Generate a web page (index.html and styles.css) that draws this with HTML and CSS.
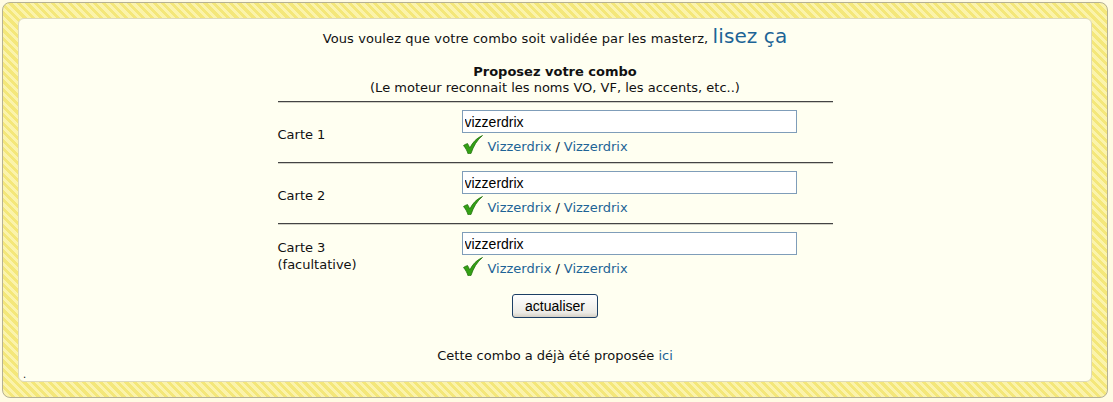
FILE: index.html
```html
<!DOCTYPE html>
<html lang="fr">
<head>
    <meta charset="UTF-8">
    <title>Proposez votre combo</title>
    <link rel="stylesheet" href="styles.css">
</head>
<body>

<div class="frame">
    <div class="box">
        <p class="intro">Vous voulez que votre combo soit validée par les masterz, <a href="#" class="big">lisez ça</a></p>

        <p class="title"><strong>Proposez votre combo</strong><br>(Le moteur reconnait les noms VO, VF, les accents, etc..)</p>

        <form class="combo">
            <div class="row">
                <div class="label">Carte 1</div>
                <div class="field">
                    <input type="text" value="vizzerdrix">
                    <div class="match">
                        <svg class="check" width="20" height="19" viewBox="0 0 20 19"><path d="M0.5 10.5 C2 9.5 3 9 4.5 8.5 C5.5 10 6.2 11.5 6.8 13 C9.5 7.5 13.5 3 19.5 0.5 C14 5 10.5 11 8 18.5 C7 18.5 6 18.7 5 18.8 C4 15.5 2.5 13 0.5 10.5 Z" fill="#34a114" stroke="#1d6a0a" stroke-width="0.7"/></svg>
                        <a href="#">Vizzerdrix</a> / <a href="#">Vizzerdrix</a>
                    </div>
                </div>
            </div>
            <div class="row">
                <div class="label">Carte 2</div>
                <div class="field">
                    <input type="text" value="vizzerdrix">
                    <div class="match">
                        <svg class="check" width="20" height="19" viewBox="0 0 20 19"><path d="M0.5 10.5 C2 9.5 3 9 4.5 8.5 C5.5 10 6.2 11.5 6.8 13 C9.5 7.5 13.5 3 19.5 0.5 C14 5 10.5 11 8 18.5 C7 18.5 6 18.7 5 18.8 C4 15.5 2.5 13 0.5 10.5 Z" fill="#34a114" stroke="#1d6a0a" stroke-width="0.7"/></svg>
                        <a href="#">Vizzerdrix</a> / <a href="#">Vizzerdrix</a>
                    </div>
                </div>
            </div>
            <div class="row">
                <div class="label">Carte 3<br>(facultative)</div>
                <div class="field">
                    <input type="text" value="vizzerdrix">
                    <div class="match">
                        <svg class="check" width="20" height="19" viewBox="0 0 20 19"><path d="M0.5 10.5 C2 9.5 3 9 4.5 8.5 C5.5 10 6.2 11.5 6.8 13 C9.5 7.5 13.5 3 19.5 0.5 C14 5 10.5 11 8 18.5 C7 18.5 6 18.7 5 18.8 C4 15.5 2.5 13 0.5 10.5 Z" fill="#34a114" stroke="#1d6a0a" stroke-width="0.7"/></svg>
                        <a href="#">Vizzerdrix</a> / <a href="#">Vizzerdrix</a>
                    </div>
                </div>
            </div>
            <div class="actions">
                <button type="button">actualiser</button>
            </div>
        </form>

        <p class="already">Cette combo a déjà été proposée <a href="#">ici</a></p>
        <div class="dot">.</div>
    </div>
</div>

</body>
</html>
```

FILE: styles.css
```css
body {
    margin: 0;
    background: #fffbe4;
    font-family: "DejaVu Sans", Verdana, sans-serif;
    font-size: 13px;
    color: #111;
}
a {
    color: #1d6496;
    text-decoration: none;
}
.frame {
    margin: 2px 0 0 2px;
    width: 1106px;
    height: 396px;
    border: 1px solid #b5b195;
    border-radius: 8px;
    padding: 15px;
    box-sizing: border-box;
    background: repeating-linear-gradient(45deg, #f4e77a 0 3px, #fbf3ab 3px 6px);
}
.box {
    height: 100%;
    box-sizing: border-box;
    background: #fffff1;
    border: 1px solid #ddd9bc;
    border-radius: 6px;
    padding-top: 5px;
    text-align: center;
}
.intro {
    margin: 0;
    line-height: 24px;
    letter-spacing: 0.1px;
}
.big {
    font-size: 20px;
}
.title {
    margin: 13px 0 5px;
    line-height: 16px;
}
.combo {
    width: 555px;
    margin: 0 auto;
}
.row {
    display: flex;
    align-items: center;
    border-top: 1px solid #444;
    box-shadow: inset 0 1px #d0d0c4;
    padding: 8px 0 6px;
    text-align: left;
}
.row:last-of-type {
    border-bottom: 1px solid #444;
}
.label {
    width: 184px;
    line-height: 17px;
    padding-top: 2px;
}
.field input {
    display: block;
    width: 335px;
    height: 23px;
    box-sizing: border-box;
    border: 1px solid #7f9db9;
    font-family: "Liberation Sans", Arial, sans-serif;
    font-size: 14px;
    padding: 1px 2px;
    margin: 0;
    background: #fff;
}
.match {
    display: flex;
    align-items: flex-end;
    height: 23px;
    line-height: 18px;
}
.check {
    margin: 0 5px 2px 1px;
}
.match a {
    margin: 0 4px;
}
.match a:first-of-type {
    margin-left: 0;
}
.actions {
    padding-top: 10px;
    text-align: center;
}
button {
    width: 86px;
    height: 24px;
    font-family: "Liberation Sans", Arial, sans-serif;
    font-size: 14px;
    color: #000;
    background: linear-gradient(#ffffff, #ecebe6 80%, #d6d0c5);
    border: 1px solid #1c3f66;
    border-radius: 3px;
}
.already {
    margin: 30px 0 0;
    line-height: 16px;
}
.dot {
    text-align: left;
    padding-left: 4px;
    font-size: 10px;
    line-height: 10px;
    margin-top: 6px;
}
```
